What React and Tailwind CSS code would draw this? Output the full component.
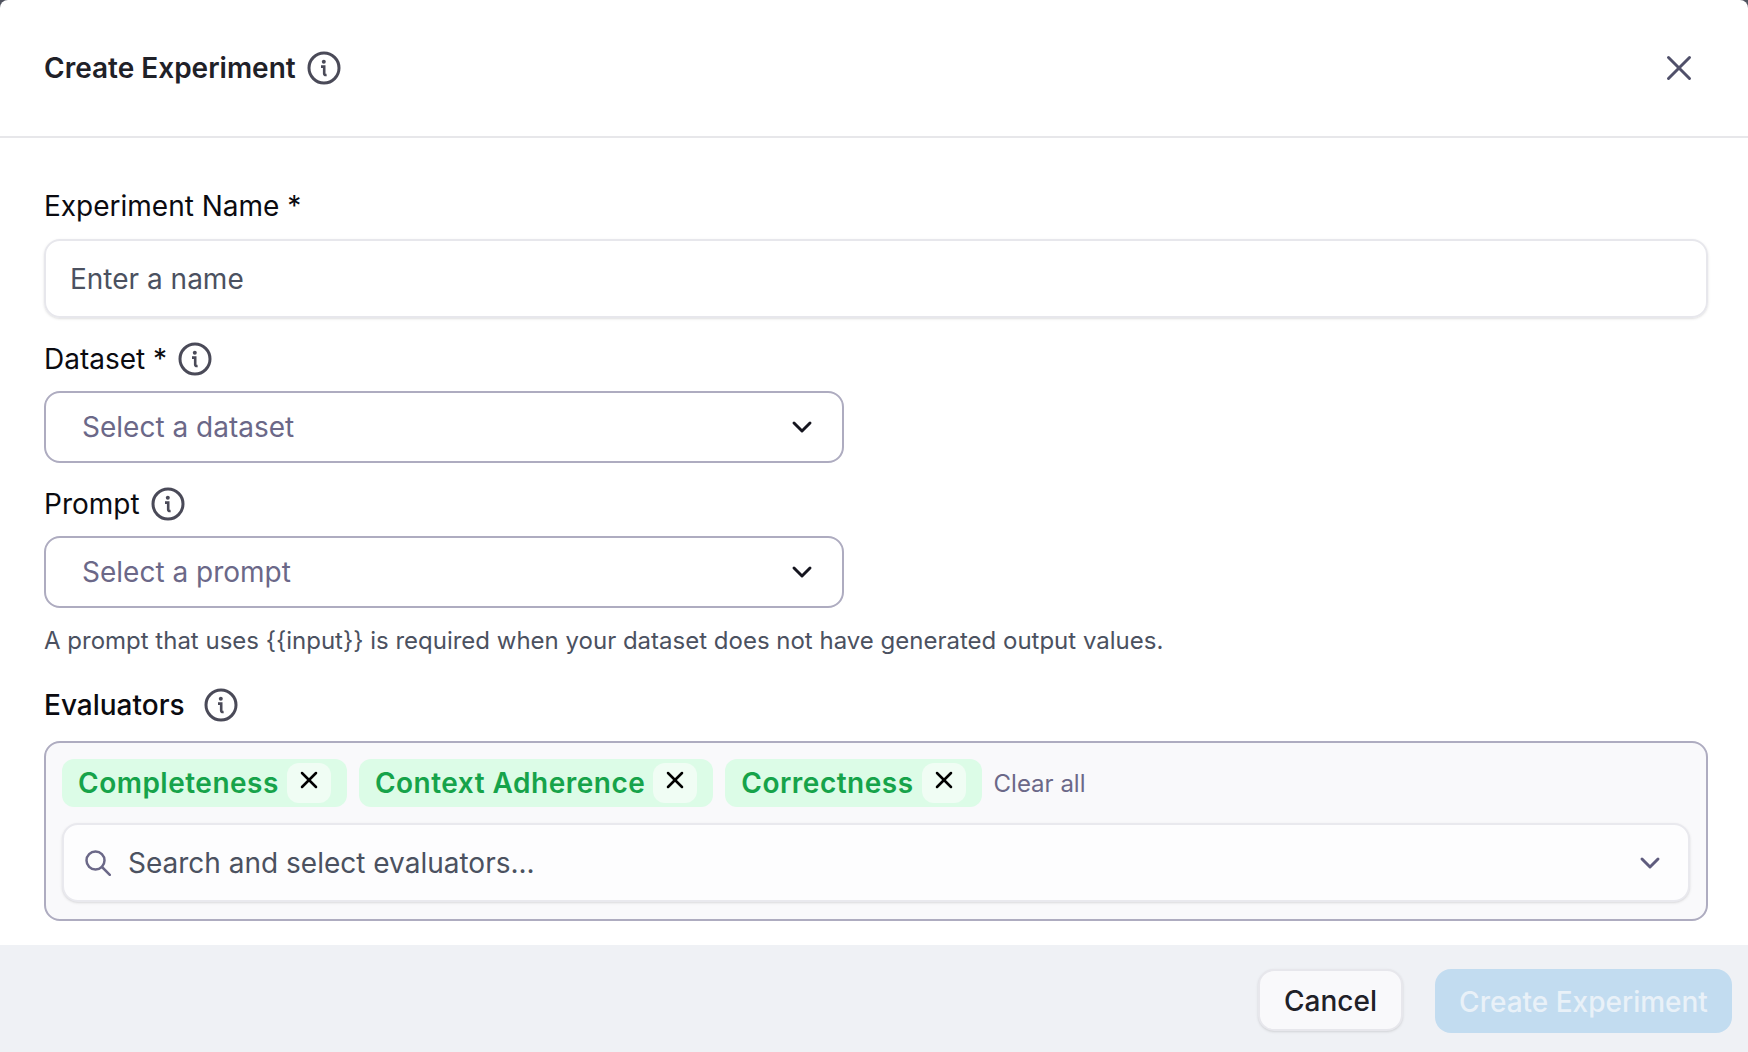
import React from 'react';
import { X, ChevronDown } from 'lucide-react';

function InfoIcon() {
  return (
    <svg width="34" height="34" viewBox="0 0 34 34" fill="none" className="shrink-0">
      <circle cx="17" cy="17" r="15" stroke="#4a4a58" strokeWidth="3" />
      <circle cx="16.8" cy="10.8" r="2" fill="#4a4a58" />
      <path d="M14 15.6h3.2v7.2c0 1 .6 1.4 2.4 1.2" stroke="#4a4a58" strokeWidth="2.6" />
    </svg>
  );
}

function SearchIcon() {
  return (
    <svg width="26" height="26" viewBox="0 0 26 26" fill="none" className="shrink-0 text-[#6b6888]">
      <circle cx="10.5" cy="10.5" r="9" stroke="currentColor" strokeWidth="2.5" />
      <path d="M17 17l7.8 7.8" stroke="currentColor" strokeWidth="2.5" strokeLinecap="round" />
    </svg>
  );
}

function Chip({ label }) {
  return (
    <div className="flex h-12 items-center rounded-xl bg-[#dcfce7] pl-4 pr-4">
      <span className="text-[28px] font-semibold tracking-[0.5px] text-[#16a34a]">{label}</span>
      <button className="ml-2 flex h-10 w-11 items-start justify-center rounded-xl bg-[#f0fdf4] pt-[3px] text-black">
        <X size={28} strokeWidth={2.2} />
      </button>
    </div>
  );
}

function SelectBox({ placeholder }) {
  return (
    <div className="flex h-[72px] w-[800px] items-center justify-between rounded-2xl border-2 border-[#aeacc0] pl-[36px] pr-[24px]">
      <span className="text-[28px] text-[#6b6888]">{placeholder}</span>
      <ChevronDown size={32} strokeWidth={2.2} className="text-[#15151f]" />
    </div>
  );
}

export default function App() {
  return (
    <div className="h-[1052px] w-full bg-[#50535f]">
      <div className="flex h-full w-full flex-col overflow-hidden rounded-t-[8px] bg-white font-['Inter',sans-serif]">
        <div className="flex h-[138px] shrink-0 items-center justify-between border-b-2 border-[#e7e7ea] pl-[44px] pr-[48px]">
          <div className="flex items-center gap-[11px]">
            <h1 className="text-[28px] font-semibold text-[#1f2128]">Create Experiment</h1>
            <InfoIcon />
          </div>
          <X size={42} strokeWidth={1.7} className="text-[#50506a]" />
        </div>

        <div className="flex flex-1 flex-col pl-[44px] pr-[40px]">
          <label className="mt-[47px] text-[28px] leading-[42px] text-[#0b0b10]">Experiment Name *</label>
          <div className="mt-3 flex h-[79px] items-center rounded-2xl border-2 border-[#e7e7ec] pl-6 shadow-sm">
            <span className="text-[28px] text-[#4b5160]">Enter a name</span>
          </div>

          <div className="mt-6 flex h-[34px] items-center gap-[11px]">
            <label className="text-[28px] text-[#0b0b10]">Dataset *</label>
            <InfoIcon />
          </div>
          <div className="mt-[15px]">
            <SelectBox placeholder="Select a dataset" />
          </div>

          <div className="mt-6 flex h-[34px] items-center gap-[11px]">
            <label className="text-[28px] text-[#0b0b10]">Prompt</label>
            <InfoIcon />
          </div>
          <div className="mt-[15px]">
            <SelectBox placeholder="Select a prompt" />
          </div>

          <p className="mt-4 text-[24px] leading-[34px] text-[#4b5160]">
            {'A prompt that uses {{input}} is required when your dataset does not have generated output values.'}
          </p>

          <div className="mt-[30px] flex h-[34px] items-center gap-[19px]">
            <label className="text-[28px] font-medium text-[#0b0b10]">Evaluators</label>
            <InfoIcon />
          </div>

          <div className="mt-[19px] flex h-[180px] flex-col rounded-2xl border-2 border-[#aeacc0] bg-[#f9f9fb] px-4 pt-4">
            <div className="flex items-center gap-3">
              <Chip label="Completeness" />
              <Chip label="Context Adherence" />
              <Chip label="Correctness" />
              <span className="pt-px text-[24px] text-[#6b6888]">Clear all</span>
            </div>
            <div className="mt-4 flex h-[79px] items-center justify-between rounded-2xl border-2 border-[#e9e9ee] bg-[#fdfdfe] pl-[21px] pr-[22px] shadow-sm">
              <div className="flex items-center gap-[17px]">
                <SearchIcon />
                <span className="text-[28px] text-[#4b5160]">Search and select evaluators...</span>
              </div>
              <ChevronDown size={32} strokeWidth={2.2} className="text-[#5f5c7e]" />
            </div>
          </div>
        </div>

        <div className="flex h-[107px] shrink-0 items-start justify-end gap-8 bg-[#eff1f5] pr-4 pt-6">
          <button className="flex h-[62px] w-[145px] items-center justify-center rounded-2xl border-2 border-[#e7e7ec] bg-[#f9f9fb] pt-px text-[28px] font-medium text-[#1f2128] shadow-sm">
            Cancel
          </button>
          <button className="flex h-[64px] w-[297px] items-center justify-center rounded-2xl bg-[#c2dcf0] pt-px text-[28px] font-medium text-[#e9f1f8]">
            Create Experiment
          </button>
        </div>
      </div>
    </div>
  );
}
